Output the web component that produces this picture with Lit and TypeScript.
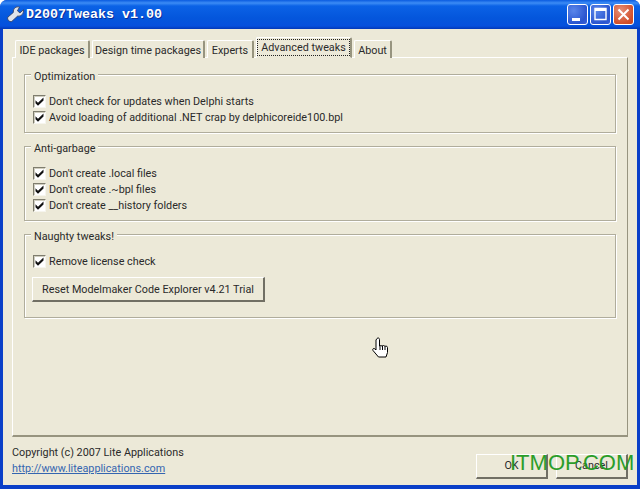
import { LitElement, html, css } from "lit";
import { customElement } from "lit/decorators.js";

const groups = [
  { title: "Optimization", h: 59, items: ["Don't check for updates when Delphi starts", "Avoid loading of additional .NET crap by delphicoreide100.bpl"] },
  { title: "Anti-garbage", h: 75, items: ["Don't create .local files", "Don't create .~bpl files", "Don't create __history folders"] },
  { title: "Naughty tweaks!", h: 84, items: ["Remove license check"], button: "Reset Modelmaker Code Explorer v4.21 Trial" },
];
const tabs = [
  { t: "IDE packages", w: 75 }, { t: "Design time packages", w: 113 }, { t: "Experts", w: 47 },
  { t: "Advanced tweaks", w: 96, active: true }, { t: "About", w: 38 },
];

@customElement("app-root")
export class AppRoot extends LitElement {
  static styles = css`
    :host { display: block; width: 640px; height: 490px; position: relative; overflow: hidden; background: #fff;
      font-family: Roboto, "Noto Sans", sans-serif; font-size: 10.8px; color: #2a2a2a; }
    .win { width: 640px; height: 489px; display: flex; flex-direction: column; border-radius: 7px 7px 0 0; overflow: hidden;
      background: #0a3fc8; box-sizing: border-box; padding: 0 3px 4px 3px; }
    .titlebar { height: 29px; margin: 0 -3px; flex: none; display: flex; align-items: center; padding: 0 6px 0 7px; gap: 2px;
      background: linear-gradient(#0a5be0 0, #3c8cf5 3px, #0b62e6 6px, #0456dc 18px, #0650dd 26px, #0338b8 29px); }
    .icon { width: 17px; height: 17px; flex: none; }
    .title { font-family: "Liberation Mono", monospace; font-weight: bold; font-size: 13.33px; color: #fff; flex: 1; text-shadow: 1px 1px 0 #0a2f9c; }
    .wb { width: 21px; height: 21px; box-sizing: border-box; border: 1px solid #fff; border-radius: 3px; flex: none;
      background: radial-gradient(circle at 30% 30%, #5a86ea, #2a55cf 70%, #3a5fd8); display: flex; align-items: center; justify-content: center; }
    .wb.close { background: radial-gradient(circle at 35% 30%, #e79078, #d2502c 70%, #c8441f); }
    .client { flex: 1; background: #ece9d8; display: flex; flex-direction: column; padding: 8px 9px 0 9px; min-height: 0; }
    .tabs { display: flex; height: 21px; align-items: flex-end; gap: 2px; padding-left: 3px; flex: none; position: relative; z-index: 1; margin-bottom: -1px; }
    .tab { height: 18px; box-sizing: border-box; border: 1px solid #fff; border-bottom: none; border-right: 2px solid #97947f; border-radius: 2px 2px 0 0;
      text-align: center; line-height: 17px; padding-top: 1px; white-space: nowrap; background: #ece9d8; }
    .tab.active { height: 21px; line-height: 15px; padding-top: 2px; border-bottom: 1px solid #ece9d8; }
    .tab.active span { outline: 1px dotted #222; padding: 1px 3px; }
    .panel { height: 380px; box-sizing: border-box; flex: none; border: 1px solid; border-color: #fff #97947f #97947f #fff; border-bottom-width: 2px;
      padding: 16px 11px 0 11px; display: flex; flex-direction: column; gap: 13px; }
    .group { border: 1px solid #b0ad9c; box-shadow: 1px 1px 0 #fff, inset 1px 1px 0 #fff; position: relative; box-sizing: border-box; padding: 18px 7px 0 8px; flex: none; }
    .legend { position: absolute; left: 6px; top: -5px; background: #ece9d8; padding: 0 3px; line-height: 13px; height: 13px; }
    .row { display: flex; align-items: center; height: 16px; gap: 3px; }
    .cb { width: 13px; height: 13px; box-sizing: border-box; background: #fff; flex: none; border: 1px solid; border-color: #7f7d6e #f6f5ee #f6f5ee #7f7d6e; box-shadow: inset 1px 1px 0 #d0cebf; display: block; }
    .btn { margin-top: 8px; margin-left: -1px; width: 233px; height: 25px; box-sizing: border-box; border: 1px solid; border-color: #fff #716f64 #716f64 #fff; border-bottom-width: 2px; border-right-width: 2px;
      text-align: center; line-height: 23px; background: #ece9d8; }
    .footer { flex: 1; display: flex; align-items: flex-start; justify-content: space-between; padding-top: 8px; min-height: 0; }
    .copy { line-height: 16px; }
    .copy a { color: #3465b0; text-decoration: underline; display: block; }
    .btns { display: flex; gap: 8px; padding: 9px 0 0 0; }
    .dbtn { width: 72px; height: 25px; box-sizing: border-box; border: 1px solid; border-color: #fff #716f64 #716f64 #fff; border-bottom-width: 2px; border-right-width: 2px; text-align: center; line-height: 22px; }
    .cursor { position: absolute; left: 371px; top: 337px; width: 20px; height: 24px; }
    .wm { position: absolute; left: 510px; top: 448px; font-family: "Liberation Sans", sans-serif; font-size: 22px; line-height: 30px; color: #1f9a1f; white-space: nowrap; opacity: .95; }
  `;

  private check() {
    return html`<svg class="cb" viewBox="0 0 11 11"><path d="M1.500 4.300 4 6.800 9.500 1.500v3L4 9.800 1.500 7.300z" fill="#111"/></svg>`;
  }

  render() {
    return html`
      <div class="win">
        <div class="titlebar">
          <svg class="icon" viewBox="0 0 16 16">
            <path d="M15.500 3.500 12.200 6.500 9.800 4.500 11.800 1C8.500 0 5.500 2.500 6 6L.8 10.500c-1 2 1.500 5 3.700 4L10 9.500c3.500 .5 6-2.500 5.500-6z" fill="#dfe3ea" stroke="#34405e" stroke-width=".8"/>
          </svg>
          <div class="title">D2007Tweaks v1.00</div>
          <div class="wb"><svg width="19" height="19" viewBox="0 0 19 19"><rect x="4" y="13" width="8" height="3" fill="#fff"/></svg></div>
          <div class="wb"><svg width="19" height="19" viewBox="0 0 19 19"><path d="M4 3.500h11v11H4z" fill="none" stroke="#fff" stroke-width="1.400"/><rect x="4" y="3" width="11" height="3" fill="#fff"/></svg></div>
          <div class="wb close"><svg width="19" height="19" viewBox="0 0 19 19"><path d="M4.500 4.500l10 10M14.500 4.500l-10 10" stroke="#fff" stroke-width="2"/></svg></div>
        </div>
        <div class="client">
          <div class="tabs">
            ${tabs.map(t => html`<div class="tab ${t.active ? "active" : ""}" style="width:${t.w}px"><span>${t.t}</span></div>`)}
          </div>
          <div class="panel">
            ${groups.map(g => html`
              <div class="group" style="height:${g.h}px">
                <div class="legend">${g.title}</div>
                ${g.items.map(i => html`<div class="row">${this.check()}<span>${i}</span></div>`)}
                ${g.button ? html`<div class="btn">${g.button}</div>` : ""}
              </div>`)}
          </div>
          <div class="footer">
            <div class="copy">Copyright (c) 2007 Lite Applications<a>http://www.liteapplications.com</a></div>
            <div class="btns"><div class="dbtn">OK</div><div class="dbtn">Cancel</div></div>
          </div>
        </div>
      </div>
      <svg class="cursor" viewBox="0 0 20 24">
        <path d="M6 1.500c1-1 2.500-.5 2.500 1V9l1-.5 1.500.5 1.500-.5 1.500.8 1.500-.3 1 1.500v5l-1.500 4.500H7.500L2 13.500c-1-2 1-2.500 2-1.500l1 1V3z" fill="#fff" stroke="#000"/>
        <path d="M9 9v4M11.500 9v4M14 9.500V13" stroke="#000"/>
      </svg>
      <div class="wm">ITMOP.COM</div>
    `;
  }
}
